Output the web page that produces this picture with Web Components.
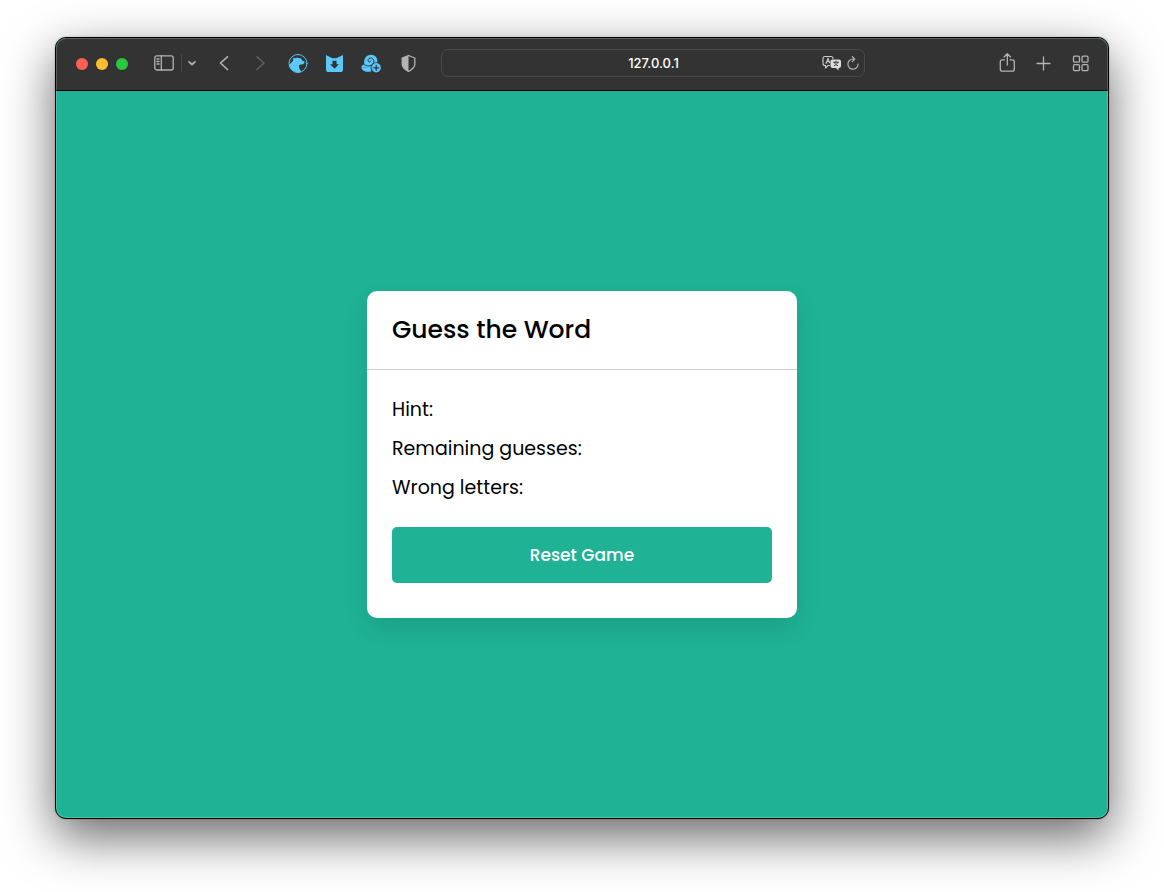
<!DOCTYPE html>
<html lang="en">
<head>
<meta charset="utf-8">
<meta name="viewport" content="width=device-width, initial-scale=1">
<title>Guess the Word</title>
<style>
  html, body { margin: 0; }
  body {
    box-sizing: border-box;
    min-height: 100vh;
    padding: 37px 55px 73px;
    display: flex;
    background: #fff;
    font-family: Poppins, Inter, sans-serif;
    --brand: #1fb295;
  }
  browser-window { flex: 1; }
</style>
</head>
<body>
<browser-window>
  <browser-toolbar slot="toolbar" address="127.0.0.1"></browser-toolbar>
  <game-card heading="Guess the Word">
    <game-detail>Hint:</game-detail>
    <game-detail>Remaining guesses:</game-detail>
    <game-detail>Wrong letters:</game-detail>
    <reset-button slot="action">Reset Game</reset-button>
  </game-card>
</browser-window>

<template id="window-template">
  <style>
    :host {
      display: flex; flex-direction: column; position: relative;
      min-width: 0; box-sizing: border-box; overflow: visible;
      border: 1px solid #000; border-radius: 11px;
      background: var(--brand);
      box-shadow: 0 18px 50px rgba(0,0,0,.6), 0 0 2px rgba(0,0,0,.3);
    }
    :host::after {
      content: ""; position: absolute; inset: 0; border-radius: 10px;
      box-shadow: inset 0 0 0 1px rgba(255,255,255,.2); pointer-events: none;
    }
    main { flex: 1; display: flex; align-items: center; justify-content: center; }
  </style>
  <slot name="toolbar"></slot>
  <main><slot></slot></main>
</template>

<template id="toolbar-template">
  <style>
    :host {
      display: grid; grid-template-columns: 385px minmax(0, 1fr) 243px; align-items: center;
      height: 52px; box-sizing: content-box; border-bottom: 1px solid #000; border-radius: 10px 10px 0 0;
      background: #333; color: #b4b4b4; font-family: Inter, sans-serif;
    }
    .group, .lights { display: flex; align-items: center; }
    .group, .address { margin-bottom: 2px; }
    .lights { gap: 8px; margin: 0 26px 0 20px; padding-top: 2px; }
    .lights button { width: 12px; height: 12px; border-radius: 50%; }
    .close { background: #ff5f57; }
    .minimise { background: #febc2e; }
    .zoom { background: #28c840; }
    button { display: block; flex: none; padding: 0; border: 0; background: none; color: inherit; }
    svg { display: block; fill: none; stroke: currentColor; stroke-width: 1.3; stroke-linecap: round; stroke-linejoin: round; }
    .divider { width: 1px; height: 18px; margin: 0 5px 0 7px; background: #454545; }
    .history { display: flex; gap: 16px; margin: 0 18px 0 17px; }
    .forward { color: #606060; }
    .extensions { display: flex; gap: 16px; color: #5ac8fa; }
    .shield { color: #b4b4b4; }
    .address {
      display: flex; align-items: center; box-sizing: border-box; height: 28px;
      padding: 0 4px 0 47px; gap: 4px; border: 1px solid #4a4a4a; border-radius: 7px;
    }
    input {
      flex: 1; min-width: 0; height: 24px; padding: 0; border: 0; outline: 0;
      background: none; color: #fff; font: 500 13px/24px Inter, sans-serif; text-align: center;
    }
    .tools { justify-content: flex-end; gap: 16px; padding-right: 17px; }
  </style>
  <div class="group">
    <div class="lights">
      <button class="close" aria-label="Close"></button>
      <button class="minimise" aria-label="Minimise"></button>
      <button class="zoom" aria-label="Zoom"></button>
    </div>
    <button aria-label="Sidebar"><svg width="20" height="16" viewBox="0 0 20 16"><rect x=".8" y=".8" width="18.4" height="14.2" rx="2"/><path d="M7.3 1v14M3 4h2M3 6.500h2M3 9h2"/></svg></button>
    <span class="divider"></span>
    <button aria-label="Sidebar options"><svg width="10" height="8" viewBox="0 0 10 8" style="stroke-width:1.7"><path d="M2 2.800 5 5.500l3-2.700"/></svg></button>
    <div class="history">
      <button aria-label="Back"><svg width="20" height="20" viewBox="0 0 20 20" style="stroke-width:1.6"><path d="M13.500 3.800 6.500 10l7 6.500"/></svg></button>
      <button class="forward" aria-label="Forward"><svg width="20" height="20" viewBox="0 0 20 20" style="stroke-width:1.6"><path d="m7 3.800 7 6.200-7 6.500"/></svg></button>
    </div>
    <div class="extensions">
      <button aria-label="Bear extension"><svg width="20" height="20" viewBox="0 0 20 20"><circle cx="10" cy="10.500" r="9" stroke-width="1"/><path fill="currentColor" stroke="none" d="M1.300 12C2.500 10.500 4.200 9 5.200 7.300c0-.6-.2-1.400 0-2.100.4-.8 1.400-.7 2 0 1.500-.6 3.300-.6 4.600.1.900-.4 1.600 0 1.700.9l.6 1.200 2 .9c.7.4.6 1.100.2 1.700-.7 1.100-2 1.600-3.400 1.600-1.300.1-2.100.9-1.900 2.200.2 2 1.300 3.700 2.600 4.700C9 20.800 2.200 18 1.300 12Z"/></svg></button>
      <button aria-label="Save extension"><svg width="20" height="20" viewBox="0 0 20 20"><path fill="currentColor" stroke="none" d="M2 2 7.300 4.700q3 1 6 0L19 2V17q0 2-2 2H4q-2 0-2-2Z"/><path fill="#333" stroke="none" d="M8.500 7.700h4v3.500h2.300l-4.300 4.500-4.300-4.500h2.300Z"/></svg></button>
      <button aria-label="Add shell extension"><svg width="22" height="20" viewBox="0 0 22 20"><path fill="currentColor" stroke="none" d="M1.500 14c-.3-1.200 1-1.500 2.800-2.700C3.500 5.500 6.500 1.800 11 1.800c4 0 6.800 3 6.300 7.200L12 15.500Z"/><path stroke="#333" stroke-width="1" d="M4.500 11.700c2 1.900 6.500 1.700 8.300-.4 1.700-2 1.300-5.400-1.200-6.200-2-.6-3.900.9-3.500 2.700.4 1.500 2.500 1.400 2.800.2"/><path fill="currentColor" stroke="none" d="M1.300 14.200c3-.1 5.500.6 10 .1v4.200c-4 .9-9 .3-10-4.300Z"/><circle cx="16.200" cy="14.800" r="5.600" fill="#333" stroke="none"/><circle cx="16.200" cy="14.800" r="4.700" fill="currentColor" stroke="none"/><path stroke="#333" stroke-width="1.200" d="M16.200 12.300v5m-2.500-2.500h5"/></svg></button>
      <button class="shield" aria-label="Privacy report"><svg width="20" height="20" viewBox="0 0 20 20"><path d="m10.500 2.500 6.300 2.500v6.300c0 3-2.700 5.200-6.300 7.200-3.600-2-6.300-4.200-6.300-7.200V5Z"/><path fill="currentColor" stroke="none" d="M10.500 2.500v16c-3.600-2-6.300-4.200-6.300-7.200V5Z"/></svg></button>
    </div>
  </div>
  <div class="address">
    <input type="text" aria-label="Address">
    <button aria-label="Translate"><svg width="20" height="16" viewBox="0 0 20 16"><path stroke="#cfcfcf" stroke-width="1.100" d="M7.500 10.500H6L3.500 13v-2.500H3q-2 0-2-2V3.500q0-2 2-2h6q2 0 2 2M4 8.500 6 3.300l1.700 4.400M4.700 6.800h2.400"/><path fill="#dedede" stroke="none" d="M10.500 4.500h6.500q2 0 2 2v4.500q0 2-2 2h-.5v2.500L14 13h-3.500q-2 0-2-2V6.500q0-2 2-2Z"/><path stroke="#333" stroke-width=".9" d="M11.500 7.200h5M14 6v1.200m-1.700.2c.7 1.500 1.800 2.700 3.500 3.300m0-3.300c-.7 1.500-1.800 2.700-3.600 3.300"/></svg></button>
    <button aria-label="Reload"><svg width="14" height="16" viewBox="0 0 14 16" style="stroke-width:1.200"><path d="M12.100 9a5.100 5.100 0 1 1-5-5h1.500M6.300 1.700l2.500 2.400-2.500 2.400"/></svg></button>
  </div>
  <div class="group tools">
    <button aria-label="Share"><svg width="20" height="22" viewBox="0 0 20 22"><path d="M7.500 7.800H5.300q-2 0-2 2v7.400q0 2 2 2h10q2 0 2-2V9.800q0-2-2-2h-2.200M10.300 13V2M7.100 5l3.200-3.200L13.500 5"/></svg></button>
    <button aria-label="New tab"><svg width="22" height="20" viewBox="0 0 22 20"><path d="M10.500 4v13M4 10.500h13"/></svg></button>
    <button aria-label="Tab overview"><svg width="20" height="20" viewBox="0 0 20 20"><rect x="2.500" y="3.200" width="6" height="6" rx="1.300"/><rect x="11" y="3.200" width="6" height="6" rx="1.300"/><rect x="2.500" y="11.700" width="6" height="6" rx="1.300"/><rect x="11" y="11.700" width="6" height="6" rx="1.300"/></svg></button>
  </div>
</template>

<template id="card-template">
  <style>
    :host {
      display: block; width: 430px; max-width: 100%; border-radius: 10px;
      background: #fff; color: #000; box-shadow: 0 10px 25px rgba(0,0,0,.1);
    }
    h1 {
      margin: 0; padding: 20px 25px; border-bottom: 1px solid #ccc;
      font-size: 25px; line-height: 38px; font-weight: 500;
    }
    .content { padding: 25px 25px 35px; }
    .details { display: grid; gap: 10px; margin-bottom: 25px; }
  </style>
  <h1></h1>
  <div class="content">
    <div class="details"><slot></slot></div>
    <slot name="action"></slot>
  </div>
</template>

<template id="detail-template">
  <style>
    :host { display: block; }
    p { margin: 0; font-size: 19px; line-height: 29px; }
  </style>
  <p><slot></slot></p>
</template>

<template id="reset-template">
  <style>
    :host { display: block; }
    button {
      display: block; width: 100%; height: 56px; padding: 0; border: 0; border-radius: 5px;
      background: var(--brand); color: #fff; font: inherit; font-size: 17px; font-weight: 500; cursor: pointer;
    }
  </style>
  <button type="button"><slot></slot></button>
</template>

<script>
  class TemplateElement extends HTMLElement {
    constructor() {
      super();
      const template = document.getElementById(this.constructor.template);
      this.attachShadow({ mode: "open" }).append(template.content.cloneNode(true));
    }
  }
  class BrowserWindow extends TemplateElement { static template = "window-template"; }
  class BrowserToolbar extends TemplateElement {
    static template = "toolbar-template";
    connectedCallback() { this.shadowRoot.querySelector("input").value = this.getAttribute("address"); }
  }
  class GameCard extends TemplateElement {
    static template = "card-template";
    connectedCallback() { this.shadowRoot.querySelector("h1").textContent = this.getAttribute("heading"); }
  }
  class GameDetail extends TemplateElement { static template = "detail-template"; }
  class ResetButton extends TemplateElement { static template = "reset-template"; }
  customElements.define("browser-window", BrowserWindow);
  customElements.define("browser-toolbar", BrowserToolbar);
  customElements.define("game-card", GameCard);
  customElements.define("game-detail", GameDetail);
  customElements.define("reset-button", ResetButton);
</script>
</body>
</html>
